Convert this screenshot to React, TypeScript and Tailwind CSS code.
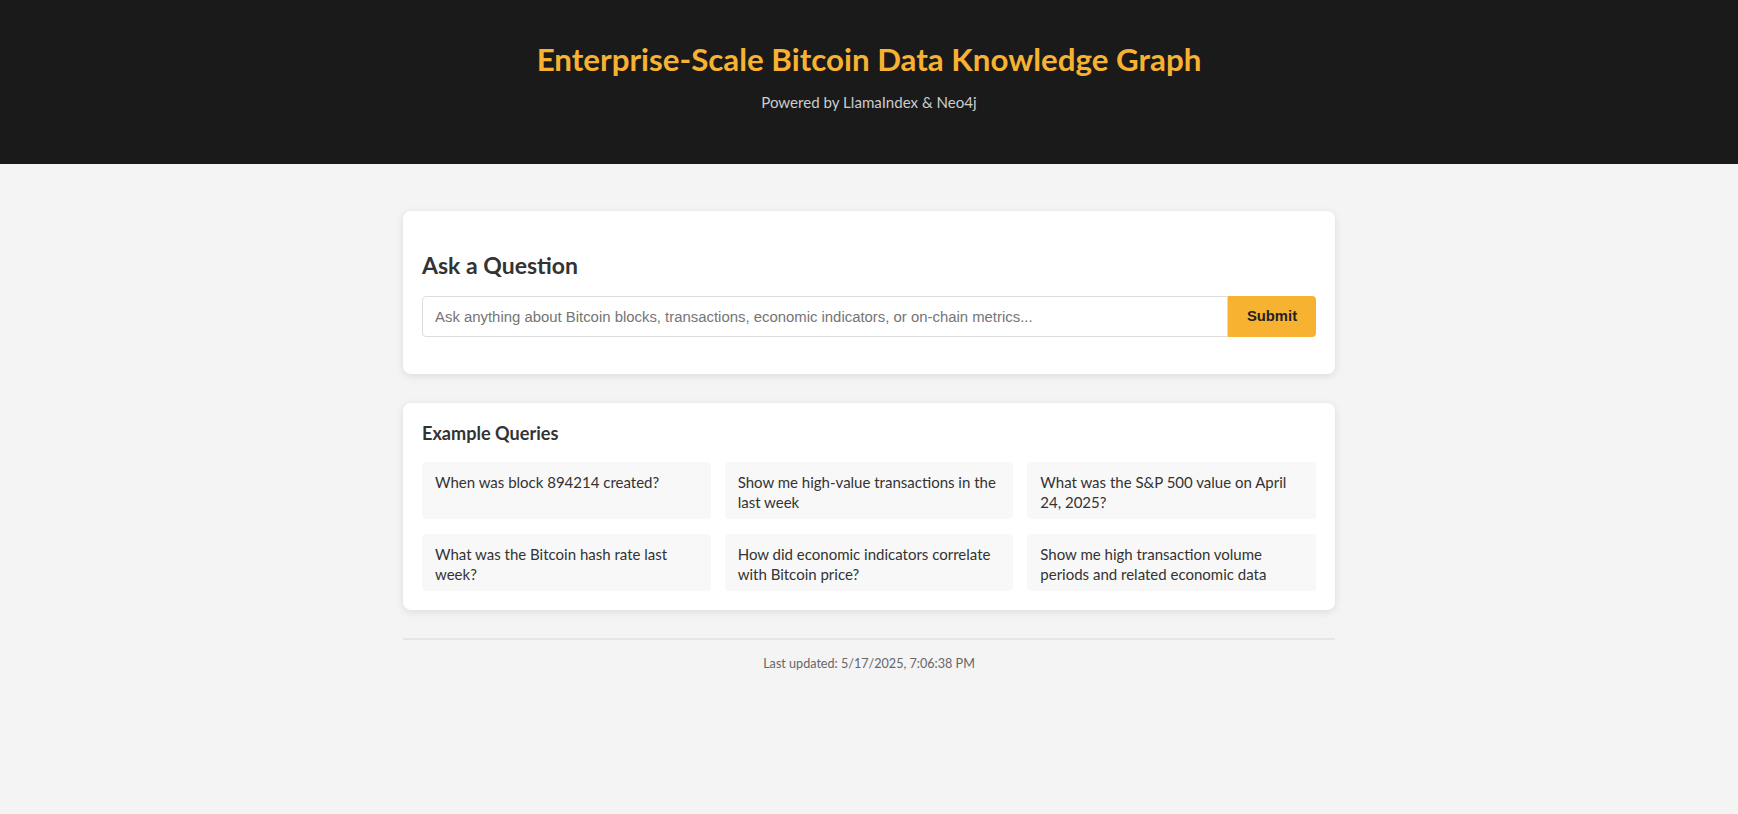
const examples = [
  "When was block 894214 created?",
  "Show me high-value transactions in the last week",
  "What was the S&P 500 value on April 24, 2025?",
  "What was the Bitcoin hash rate last week?",
  "How did economic indicators correlate with Bitcoin price?",
  "Show me high transaction volume periods and related economic data",
];

export default function App() {
  return (
    <div className="min-h-screen bg-[#f4f4f4] font-['Lato',sans-serif] text-[#333]">
      <header className="h-[164px] bg-[#1a1a1a] flex flex-col items-center pt-[40px]">
        <h1 className="text-[31.3px] leading-[38px] font-bold text-[#f7b232]">
          Enterprise-Scale Bitcoin Data Knowledge Graph
        </h1>
        <p className="mt-[12px] text-[15.1px] leading-[24px] text-[#ccc]">Powered by LlamaIndex &amp; Neo4j</p>
      </header>

      <main className="w-[932px] mx-auto pt-[47px]">
        <section className="bg-white rounded-lg shadow-[0_2px_8px_rgba(0,0,0,0.1)] px-[19px] pt-[39px] pb-[37px]">
          <h2 className="text-[23px] leading-[30px] font-bold">Ask a Question</h2>
          <form className="flex mt-[16px]" onSubmit={(e) => e.preventDefault()}>
            <input
              type="text"
              placeholder="Ask anything about Bitcoin blocks, transactions, economic indicators, or on-chain metrics..."
              className="flex-1 h-[41px] px-[12px] border border-[#ddd] rounded-l-[4px] font-['Liberation_Sans',Arial,sans-serif] text-[14.9px] placeholder:text-[#757575] outline-none"
            />
            <button
              type="submit"
              className="w-[88px] h-[41px] bg-[#f7b232] rounded-r-[4px] font-['Liberation_Sans',Arial,sans-serif] text-[14.8px] font-bold text-[#222]"
            >
              Submit
            </button>
          </form>
        </section>

        <section className="mt-[29px] bg-white rounded-lg shadow-[0_2px_8px_rgba(0,0,0,0.1)] px-[19px] pt-[18px] pb-[19px]">
          <h3 className="text-[18.1px] leading-[25px] font-bold">Example Queries</h3>
          <div className="grid grid-cols-3 gap-x-[14px] gap-y-[15px] mt-[16px]">
            {examples.map((q) => (
              <div key={q} className="bg-[#f8f8f8] rounded-[4px] px-[13px] pt-[11px] pb-[7px] text-[15px] leading-[19.5px] min-h-[57px] cursor-pointer">
                {q}
              </div>
            ))}
          </div>
        </section>

        <footer className="mt-[28px] border-t-2 border-[#e6e6e6] pt-[14px] text-center text-[12.6px] leading-[20px] text-[#666]">
          Last updated: 5/17/2025, 7:06:38 PM
        </footer>
      </main>
    </div>
  );
}
